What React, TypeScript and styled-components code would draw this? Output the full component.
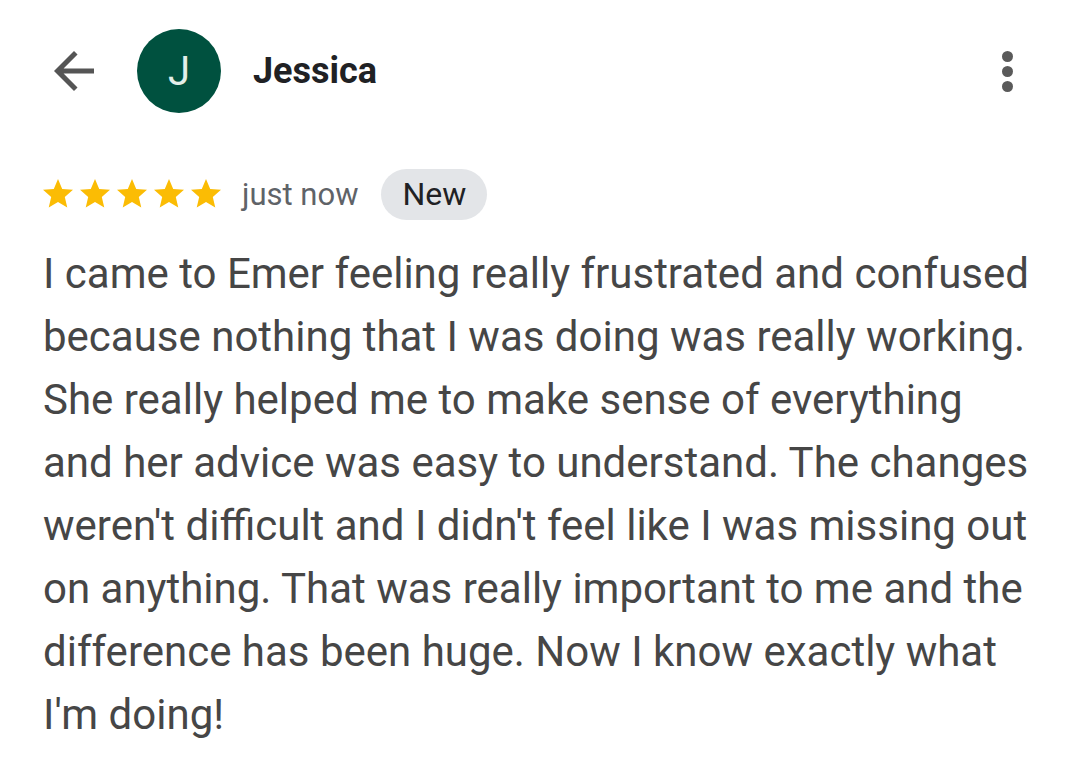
import React from "react";
import styled, { createGlobalStyle } from "styled-components";

const Global = createGlobalStyle`
  body {
    margin: 0;
    background: #ffffff;
    font-family: Roboto, "Noto Sans", Arial, sans-serif;
  }
`;

const Page = styled.div`
  width: 1080px;
  height: 772px;
  box-sizing: border-box;
  padding: 28px 42px 0 43px;
  background: #fff;
`;

const Header = styled.div`
  display: flex;
  align-items: center;
  height: 86px;
`;

const BackButton = styled.div`
  width: 60px;
  height: 60px;
  display: flex;
  align-items: center;
  margin-left: 1px;
`;

const Avatar = styled.div`
  width: 84px;
  height: 84px;
  border-radius: 50%;
  background: #00513f;
  color: #e3efe9;
  display: flex;
  align-items: center;
  justify-content: center;
  font-size: 40px;
  margin-left: 33px;
`;

const Name = styled.div`
  margin-left: 32px;
  font-size: 36px;
  font-weight: 700;
  color: #202124;
  flex: 1;
`;

const MoreButton = styled.div`
  width: 20px;
  display: flex;
  flex-direction: column;
  align-items: center;
  gap: 4px;
  margin-right: 21px;

  span {
    width: 11px;
    height: 11px;
    border-radius: 50%;
    background: #5a5a5a;
  }
`;

const MetaRow = styled.div`
  display: flex;
  align-items: center;
  margin-top: 54px;
  height: 52px;
`;

const Stars = styled.div`
  display: flex;
  gap: 1px;
  margin-left: -3px;
`;

const Time = styled.span`
  margin-left: 18px;
  font-size: 31px;
  color: #5f6368;
`;

const Chip = styled.span`
  margin-left: 23px;
  padding: 0 21px;
  height: 51px;
  border-radius: 26px;
  background: #e3e5e8;
  display: flex;
  align-items: center;
  font-size: 32px;
  color: #202124;
`;

const Body = styled.p`
  margin: 22px 0 0;
  font-size: 42px;
  line-height: 63px;
  color: #464646;
`;

const Star = () => (
  <svg width="36" height="36" viewBox="0 0 24 24">
    <path
      fill="#fbbc04"
      d="M12 17.27L18.18 21l-1.64-7.03L22 9.24l-7.19-.61L12 2 9.19 8.63 2 9.24l5.46 4.73L5.82 21z"
    />
  </svg>
);

const App: React.FC = () => (
  <>
    <Global />
    <Page>
      <Header>
        <BackButton>
          <svg width="60" height="60" viewBox="0 0 24 24">
            <path fill="#555555" d="M20 11H7.83l5.59-5.59L12 4l-8 8 8 8 1.41-1.41L7.83 13H20v-2z" />
          </svg>
        </BackButton>
        <Avatar>J</Avatar>
        <Name>Jessica</Name>
        <MoreButton>
          <span />
          <span />
          <span />
        </MoreButton>
      </Header>
      <MetaRow>
        <Stars>
          {[0, 1, 2, 3, 4].map(i => (
            <Star key={i} />
          ))}
        </Stars>
        <Time>just now</Time>
        <Chip>New</Chip>
      </MetaRow>
      <Body>
        I came to Emer feeling really frustrated and confused because nothing that I was doing was really
        working. She really helped me to make sense of everything and her advice was easy to understand. The
        changes weren't difficult and I didn't feel like I was missing out on anything. That was really
        important to me and the difference has been huge. Now I know exactly what I'm doing!
      </Body>
    </Page>
  </>
);

export default App;
